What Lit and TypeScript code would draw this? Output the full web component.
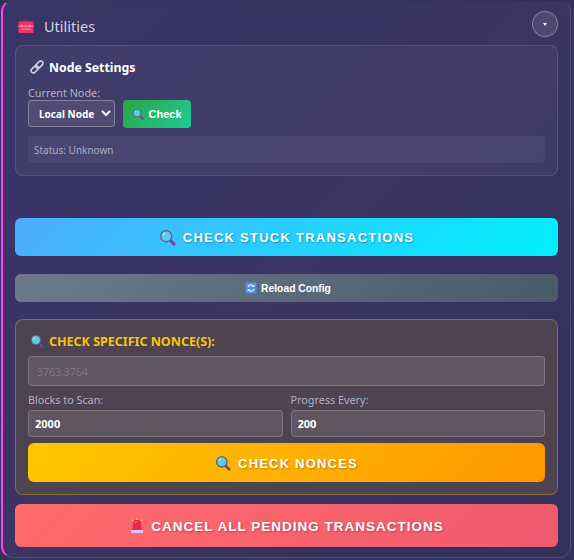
import { LitElement, html, css, svg } from 'lit';
import { customElement } from 'lit/decorators.js';

const lens = (size: number) => html`
  <svg class="icon" width=${size} height=${size} viewBox="0 0 16 16">
    <path d="M10 10.2 L14.2 14.4" stroke="#7b3f8c" stroke-width="2.6" stroke-linecap="round"/>
    <circle cx="6.8" cy="6.8" r="5.2" fill="#62c8ea" stroke="#55697f" stroke-width="1.3"/>
    <path d="M3.8 6 A3 3 0 0 1 6 3.7" stroke="#bdeefa" stroke-width="1" fill="none"/>
  </svg>`;

const toolbox = svg`
  <path d="M5.5 4 V2.8 H10.5 V4" fill="none" stroke="#8a3a66" stroke-width="1"/>
  <rect x="0.5" y="3.5" width="15" height="11.5" rx="0.8" fill="#f5336b"/>
  <rect x="0.5" y="7.6" width="15" height="1" fill="#ff8fae"/>
  <rect x="3" y="10.6" width="10" height="1" fill="#ff8fae"/>
  <rect x="3.2" y="7.2" width="1.6" height="1.8" fill="#ffb3c8"/>
  <rect x="11.2" y="7.2" width="1.6" height="1.8" fill="#ffb3c8"/>`;

const link = svg`
  <g transform="rotate(-45 8 8)" fill="none" stroke="#cfccdc" stroke-width="1.9">
    <rect x="-0.5" y="5.4" width="9.5" height="5.2" rx="2.6"/>
    <rect x="7" y="5.4" width="9.5" height="5.2" rx="2.6"/>
  </g>`;

const reload = svg`
  <rect x="0.5" y="0.5" width="11" height="11" rx="1" fill="#4f8fe8"/>
  <path d="M3 5 A3.2 3.2 0 0 1 8.6 4.2 M9 7 A3.2 3.2 0 0 1 3.4 7.8" fill="none" stroke="#e8f2ff" stroke-width="1.3"/>
  <path d="M9.4 2.4 V5 H6.9 Z M2.6 9.6 V7 H5.1 Z" fill="#e8f2ff"/>`;

const siren = svg`
  <path d="M3.2 12 L4.2 5.5 A3.8 3.8 0 0 1 11.8 5.5 L12.8 12 Z" fill="#e8264a"/>
  <path d="M6 5.2 A2 2 0 0 1 8 3.6" stroke="#ff8c9c" stroke-width="1" fill="none"/>
  <rect x="2" y="12" width="12" height="3" rx="0.5" fill="#d8c8ee"/>
  <path d="M8 0 V1.8 M2.6 1.6 L4 3 M13.4 1.6 L12 3" stroke="#f7c948" stroke-width="1.2"/>`;

@customElement('app-root')
export class AppRoot extends LitElement {
  static styles = css`
    :host {
      display: block;
      height: 560px;
      overflow: hidden;
      background: #35325c;
      font-family: "Noto Sans", "Open Sans", sans-serif;
      color: #fff;
    }

    * { box-sizing: border-box; }

    .icon { flex: none; display: block; }

    .panel {
      margin-left: 1px;
      width: 570px;
      height: 558px;
      padding: 10px 12px 0 12px;
      border: 1px solid rgba(255, 255, 255, 0.12);
      border-left: 2px solid #ff40ff;
      border-top-color: transparent;
      border-radius: 12px;
      background: linear-gradient(135deg, #393566 0%, #3a3464 35%, #3c3461 50%, #36335f 70%, #32315a 100%);
    }

    .head {
      display: flex;
      align-items: center;
      height: 26px;
      gap: 10px;
      padding-left: 3px;
    }

    .head .icon { margin-top: 4px; }

    .head h2 {
      flex: 1;
      margin: 0 0 -4px;
      font-size: 14.5px;
      font-weight: 400;
      color: #d6d4e2;
    }

    .toggle {
      width: 26px;
      height: 26px;
      padding: 0;
      border-radius: 50%;
      border: 1px solid rgba(255, 255, 255, 0.3);
      background: rgba(255, 255, 255, 0.1);
      display: flex;
      align-items: center;
      justify-content: center;
    }

    .toggle i {
      width: 0;
      height: 0;
      border: 2.5px solid transparent;
      border-top: 3px solid #fff;
      border-bottom: 0;
    }

    .card {
      margin-top: 8px;
      height: 131px;
      padding: 11px 12px;
      border: 1px solid rgba(255, 255, 255, 0.13);
      border-radius: 8px;
      background: rgba(255, 255, 255, 0.04);
    }

    .card h3 {
      display: flex;
      align-items: center;
      gap: 5px;
      margin: 0;
      height: 20px;
      padding-left: 2px;
      font-size: 12.3px;
      font-weight: 700;
    }

    .field-label {
      display: block;
      font-size: 10.8px;
      line-height: 14px;
      color: #b5b2c4;
    }

    .node-label {
      margin-top: 8px;
      line-height: 15px;
    }

    .node-row {
      display: flex;
      gap: 8px;
      align-items: flex-start;
    }

    select {
      width: 87px;
      height: 27px;
      padding: 0 0 0 6px;
      border: 1px solid rgba(255, 255, 255, 0.3);
      border-radius: 4px;
      background: #514a73;
      color: #fff;
      font: 700 10px "Noto Sans", sans-serif;
    }

    .check {
      display: flex;
      align-items: center;
      justify-content: center;
      gap: 4px;
      width: 68px;
      height: 28px;
      padding: 0;
      border: 0;
      border-radius: 4px;
      background: linear-gradient(135deg, #28a745, #20c997);
      color: #fff;
      font: 700 11px "Liberation Sans", sans-serif;
    }

    .status {
      margin-top: 8px;
      height: 27px;
      padding: 0 6px;
      display: flex;
      align-items: center;
      border-radius: 4px;
      background: rgba(255, 255, 255, 0.05);
      font-size: 10px;
      color: #aeabc0;
    }

    .btn {
      display: flex;
      align-items: center;
      justify-content: center;
      width: 100%;
      padding: 1px 0 0;
      border: 0;
      border-radius: 6px;
      color: #fff;
      font-family: "Liberation Sans", Arial, sans-serif;
      font-weight: 700;
      text-transform: uppercase;
      letter-spacing: 1px;
      text-shadow: 1px 1px 2px rgba(0, 0, 0, 0.3);
    }

    .stuck {
      margin-top: 42px;
      height: 38px;
      gap: 7px;
      font-size: 13px;
      letter-spacing: 1.25px;
      background: linear-gradient(135deg, #4facfe, #00f2fe);
    }

    .reload {
      margin-top: 18px;
      height: 28px;
      gap: 4px;
      padding: 0;
      font-size: 10.3px;
      letter-spacing: 0;
      text-transform: none;
      text-shadow: none;
      background: linear-gradient(135deg, #6c7a89, #4b5a6b);
    }

    .reload .icon { margin-left: 3px; }

    .nonce {
      margin-top: 17px;
      height: 176px;
      padding: 11px 12px;
      border: 1px solid rgba(255, 193, 7, 0.35);
      border-radius: 8px;
      background: #4d4351;
    }

    .nonce h3 {
      display: flex;
      align-items: center;
      gap: 5px;
      margin: 0 0 5px;
      height: 20px;
      padding-left: 2px;
      font-size: 12.5px;
      font-weight: 700;
      color: #ffc107;
    }

    input {
      display: block;
      width: 100%;
      height: 30px;
      padding: 0 6px;
      border: 1px solid rgba(255, 255, 255, 0.2);
      border-radius: 4px;
      background: rgba(255, 255, 255, 0.1);
      color: #fff;
      font: 700 11px "Noto Sans", sans-serif;
      outline: none;
    }

    input::placeholder {
      color: #7d7885;
      font-weight: 400;
      font-size: 10.5px;
    }

    .nonce > input { padding: 0 8px; }

    .pair {
      display: grid;
      grid-template-columns: 1fr 1fr;
      gap: 8px;
      margin-top: 7px;
    }

    .pair .field-label { margin-bottom: 3px; }

    .pair input { height: 27px; }

    .go {
      margin-top: 6px;
      height: 39px;
      gap: 7px;
      font-size: 13px;
      letter-spacing: 1.2px;
      background: linear-gradient(135deg, #ffc800, #ff9800);
    }

    .cancel {
      margin-top: 9px;
      height: 43px;
      gap: 6px;
      font-size: 13.5px;
      background: linear-gradient(135deg, #ff6b6b, #f05a70);
    }
  `;

  render() {
    return html`
      <div class="panel">
        <div class="head">
          <svg class="icon" width="16" height="16" viewBox="0 0 16 16">${toolbox}</svg>
          <h2>Utilities</h2>
          <button class="toggle"><i></i></button>
        </div>

        <section class="card">
          <h3>
            <svg class="icon" width="14" height="14" viewBox="0 0 16 16">${link}</svg>
            Node Settings
          </h3>
          <label class="field-label node-label">Current Node:</label>
          <div class="node-row">
            <select><option>Local Node</option></select>
            <button class="check">${lens(12)}Check</button>
          </div>
          <div class="status">Status: Unknown</div>
        </section>

        <button class="btn stuck">${lens(17)}Check Stuck Transactions</button>
        <button class="btn reload">
          <svg class="icon" width="12" height="12" viewBox="0 0 12 12">${reload}</svg>
          Reload Config
        </button>

        <section class="nonce">
          <h3>${lens(14)}CHECK SPECIFIC NONCE(S):</h3>
          <input placeholder="3763,3764" />
          <div class="pair">
            <div>
              <label class="field-label">Blocks to Scan:</label>
              <input value="2000" />
            </div>
            <div>
              <label class="field-label">Progress Every:</label>
              <input value="200" />
            </div>
          </div>
          <button class="btn go">${lens(16)}Check Nonces</button>
        </section>

        <button class="btn cancel">
          <svg class="icon" width="16" height="16" viewBox="0 0 16 16">${siren}</svg>
          Cancel All Pending Transactions
        </button>
      </div>
    `;
  }
}
